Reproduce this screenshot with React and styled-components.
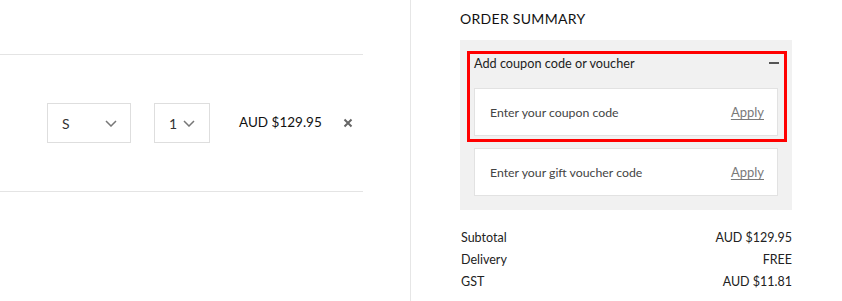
import React from "react";
import styled, { createGlobalStyle } from "styled-components";

const Global = createGlobalStyle`
  html, body { margin: 0; padding: 0; background: #fff; }
  body { font-family: Lato, "Open Sans", sans-serif; color: #222; }
  * { box-sizing: border-box; }
`;

const Page = styled.div`
  display: flex;
  width: 842px;
  height: 301px;
  overflow: hidden;
`;

const CartColumn = styled.div`
  width: 411px;
  flex: none;
  border-right: 1px solid #e6e6e6;
  padding-top: 54px;
`;

const CartItem = styled.div`
  width: 363px;
  height: 138px;
  border-top: 1px solid #e4e4e4;
  border-bottom: 1px solid #e4e4e4;
  display: flex;
  align-items: center;
  padding-left: 47px;
`;

const Select = styled.div`
  flex: none;
  width: ${(p) => p.$w}px;
  height: 40px;
  border: 1px solid #dedede;
  display: flex;
  align-items: center;
  justify-content: space-between;
  padding: 0 ${(p) => p.$pr}px 0 14px;
  margin-right: ${(p) => p.$mr}px;
  font-size: 14px;
  color: #333;
`;

const Price = styled.div`
  flex: none;
  white-space: nowrap;
  width: 104px;
  font-size: 13.5px;
  color: #111;
  margin-top: -2px;
`;

const Summary = styled.div`
  padding-left: 49px;
  width: 381px;
`;

const Title = styled.h2`
  margin: 0;
  padding-top: 10px;
  height: 40px;
  font-size: 14px;
  font-weight: 400;
  letter-spacing: 0.3px;
  color: #111;
  line-height: 18px;
`;

const Panel = styled.div`
  background: #f1f1f1;
  padding: 14px;
  display: flex;
  flex-direction: column;
  gap: 12px;
`;

const Highlight = styled.div`
  position: relative;
  &::after {
    content: "";
    position: absolute;
    top: -3px;
    left: -7px;
    right: -9px;
    bottom: -6px;
    border: 3px solid #ff0000;
    pointer-events: none;
  }
`;

const AccordionHeader = styled.div`
  display: flex;
  align-items: center;
  justify-content: space-between;
  height: 18px;
  margin-bottom: 16px;
  font-size: 12.7px;
  color: #222;
`;

const Minus = styled.span`
  width: 10px;
  height: 2px;
  background: #555;
  margin-right: -1px;
`;

const CodeField = styled.div`
  height: 48px;
  background: #fff;
  border: 1px solid #e2e2e2;
  display: flex;
  align-items: center;
  justify-content: space-between;
  padding: 0 13px 0 15px;
  font-size: 12.3px;
  color: #444;
`;

const Apply = styled.span`
  color: #7a7a7a;
  font-size: 13px;
  text-decoration: underline;
  text-underline-offset: 2px;
`;

const Totals = styled.div`
  margin-top: 17px;
  padding-left: 1px;
`;

const TotalRow = styled.div`
  display: flex;
  justify-content: space-between;
  height: 22px;
  line-height: 22px;
  font-size: 12.5px;
  color: #222;
`;

const Chevron = () => (
  <svg width="12" height="7" viewBox="0 0 12 7">
    <path d="M1 1l5 5 5-5" fill="none" stroke="#777" strokeWidth="1.5" />
  </svg>
);

const Close = () => (
  <svg width="10" height="10" viewBox="0 0 10 10">
    <path d="M1.5 1.5l7 7M8.5 1.5l-7 7" fill="none" stroke="#666" strokeWidth="2" />
  </svg>
);

export default function App() {
  return (
    <>
      <Global />
      <Page>
        <CartColumn>
          <CartItem>
            <Select $w={84} $pr={13} $mr={23}>
              <span>S</span>
              <Chevron />
            </Select>
            <Select $w={56} $pr={14} $mr={29}>
              <span>1</span>
              <Chevron />
            </Select>
            <Price>AUD $129.95</Price>
            <Close />
          </CartItem>
        </CartColumn>
        <Summary>
          <Title>ORDER SUMMARY</Title>
          <Panel>
            <Highlight>
              <AccordionHeader>
                <span>Add coupon code or voucher</span>
                <Minus />
              </AccordionHeader>
              <CodeField>
                <span>Enter your coupon code</span>
                <Apply>Apply</Apply>
              </CodeField>
            </Highlight>
            <CodeField>
              <span>Enter your gift voucher code</span>
              <Apply>Apply</Apply>
            </CodeField>
          </Panel>
          <Totals>
            <TotalRow><span>Subtotal</span><span>AUD $129.95</span></TotalRow>
            <TotalRow><span>Delivery</span><span>FREE</span></TotalRow>
            <TotalRow><span>GST</span><span>AUD $11.81</span></TotalRow>
          </Totals>
        </Summary>
      </Page>
    </>
  );
}
